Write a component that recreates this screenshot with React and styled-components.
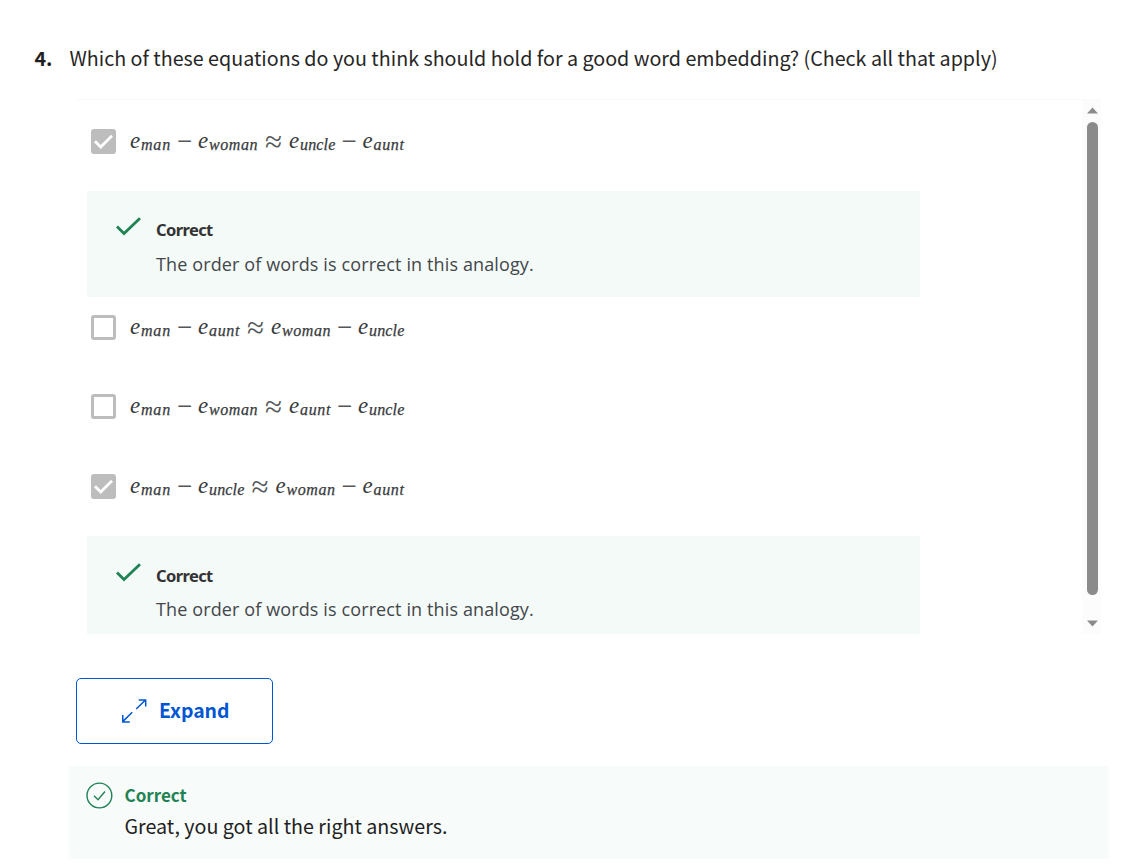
import React from "react";
import styled, { createGlobalStyle } from "styled-components";

const GlobalStyle = createGlobalStyle`
  body { margin: 0; background: #fff; }
  * { box-sizing: border-box; }
`;

const sourceFont = `"Noto Sans CJK SC", "Source Sans Pro", sans-serif`;

const Page = styled.main`
  width: 1135px;
  height: 867px;
  overflow: hidden;
  padding-top: 43px;
  background: #fff;
  color: #1f1f1f;
  font-family: ${sourceFont};
`;

const Question = styled.h1`
  display: flex;
  margin: 0 0 26px;
  padding-left: 34.5px;
  font-size: 19.7px;
  font-weight: 400;
  line-height: 30px;
  white-space: nowrap;
`;

const QuestionNumber = styled.span`
  width: 35px;
  font-weight: 700;
`;

const Prompt = styled.span`
  color: #262626;
`;

const ScrollArea = styled.section`
  display: flex;
  justify-content: space-between;
  width: 1025px;
  height: 535px;
  margin-left: 76px;
  overflow: hidden;
  border-top: 1px solid #f9f9f9;
`;

const Options = styled.div`
  width: 844px;
  padding: 29px 0 0 11px;
`;

const OptionRow = styled.div`
  display: flex;
  height: 25px;
  margin-bottom: ${(p) => p.$gap}px;
  padding-left: 4px;
`;

const Checkbox = styled.span`
  width: 25px;
  height: 25px;
  margin-right: 14px;
  border: 3px solid #bdbdbd;
  border-radius: 3px;
  background: ${(p) => (p.$checked ? "#bdbdbd" : "#fff")};
  svg { display: block; width: 19px; height: 19px; }
`;

const Equation = styled.span`
  display: flex;
  height: 25px;
  color: #373a3c;
  font-family: "Liberation Serif", serif;
  line-height: 25px;
  white-space: nowrap;
`;

const Vector = styled.i`
  width: 11px;
  font-size: 23px;
  line-height: 23px;
`;

const Subscript = styled.i`
  width: ${(p) => p.$width}px;
  padding-top: 4px;
  font-size: 16px;
  line-height: 24px;
  letter-spacing: ${(p) => p.$spacing}px;
  -webkit-text-stroke: 0.25px #373a3c;
`;

const Operator = styled.span`
  width: ${(p) => (p.$wide ? 31 : 27)}px;
  color: #55585a;
  font-size: ${(p) => (p.$wide ? 31 : 27)}px;
  line-height: ${(p) => (p.$wide ? 25 : 24)}px;
  text-align: center;
`;

const Feedback = styled.div`
  display: flex;
  width: 833px;
  height: 106px;
  margin-bottom: 18px;
  padding: 26px 0 0 29px;
  background: #f4faf8;
  font-family: "Open Sans", "Segoe UI", sans-serif;
  color: #43474a;
  svg { width: 25px; height: 19px; margin: ${(p) => p.$drop}px 15px 0 0; }
`;

const FeedbackText = styled.div`
  white-space: nowrap;
`;

const FeedbackTitle = styled.strong`
  display: block;
  height: 34px;
  color: #333;
  font-family: "Noto Sans", sans-serif;
  font-size: 16.5px;
  font-weight: 700;
  letter-spacing: -0.6px;
  line-height: ${(p) => 25 + 2 * p.$drop}px;
`;

const FeedbackBody = styled.span`
  display: block;
  font-size: 18px;
  font-weight: 400;
  letter-spacing: 0.12px;
  line-height: 26px;
`;

const ScrollTrack = styled.div`
  display: flex;
  flex-direction: column;
  align-items: center;
  width: 19px;
  height: 534px;
  padding: 7px 0 0 2px;
  background: #fcfcfc;
  svg { display: block; width: 11px; height: 7px; flex: none; }
`;

const ScrollThumb = styled.div`
  width: 11px;
  height: 473px;
  margin: 8px 0 25px;
  border-radius: 6px;
  background: #8b8b8b;
`;

const ExpandButton = styled.button`
  display: flex;
  align-items: center;
  width: 197px;
  height: 66px;
  margin: 44px 0 22px 76px;
  padding: 0 0 2px 44px;
  border: 1.4px solid #0056d2;
  border-radius: 5px;
  background: #fff;
  color: #0056d2;
  font: 700 19.4px/30px ${sourceFont};
  svg { width: 26px; height: 26px; margin: 1px 12px 0 0; }
`;

const Result = styled.section`
  display: flex;
  width: 1040px;
  height: 93px;
  margin-left: 69px;
  padding: 16px 0 0 17px;
  background: #f7fbfa;
  svg { width: 27px; height: 27px; margin-right: 11.5px; }
`;

const ResultTitle = styled.strong`
  display: block;
  height: 30px;
  color: #1f8354;
  font-size: 17px;
  line-height: 26px;
`;

const ResultBody = styled.span`
  display: block;
  font-size: 19.7px;
  line-height: 28px;
  white-space: nowrap;
`;

const SUBS = {
  man: { width: 30, spacing: 0.8 },
  woman: { width: 49, spacing: 0.55 },
  uncle: { width: 35.5, spacing: 0.15 },
  aunt: { width: 31, spacing: 0.65 },
};

function Embedding({ word }) {
  const s = SUBS[word];
  return (
    <>
      <Vector>e</Vector>
      <Subscript $width={s.width} $spacing={s.spacing}>{word}</Subscript>
    </>
  );
}

function Option({ checked, words, gap }) {
  const [a, b, c, d] = words;
  return (
    <OptionRow $gap={gap}>
      <Checkbox $checked={checked}>
        {checked && (
          <svg viewBox="0 0 19 19" fill="none" stroke="#fff" strokeWidth="2.8">
            <path d="M1 9.3L6.7 15L18 3.7" />
          </svg>
        )}
      </Checkbox>
      <Equation>
        <Embedding word={a} />
        <Operator>−</Operator>
        <Embedding word={b} />
        <Operator $wide>≈</Operator>
        <Embedding word={c} />
        <Operator>−</Operator>
        <Embedding word={d} />
      </Equation>
    </OptionRow>
  );
}

function CorrectFeedback({ drop = 0 }) {
  return (
    <Feedback $drop={drop}>
      <svg viewBox="0 0 25 19" fill="none" stroke="#1f8354" strokeWidth="2.8">
        <path d="M1 9.5L8 16.5L24 1.2" />
      </svg>
      <FeedbackText>
        <FeedbackTitle $drop={drop}>Correct</FeedbackTitle>
        <FeedbackBody>The order of words is correct in this analogy.</FeedbackBody>
      </FeedbackText>
    </Feedback>
  );
}

export default function App() {
  return (
    <Page>
      <GlobalStyle />
      <Question>
        <QuestionNumber>4.</QuestionNumber>
        <Prompt>Which of these equations do you think should hold for a good word embedding? (Check all that apply)</Prompt>
      </Question>
      <ScrollArea>
        <Options>
          <Option checked words={["man", "woman", "uncle", "aunt"]} gap={37} />
          <CorrectFeedback />
          <Option words={["man", "aunt", "woman", "uncle"]} gap={54} />
          <Option words={["man", "woman", "aunt", "uncle"]} gap={55} />
          <Option checked words={["man", "uncle", "woman", "aunt"]} gap={37} />
          <CorrectFeedback drop={1} />
        </Options>
        <ScrollTrack>
          <svg viewBox="0 0 11 7"><path d="M0 6.5L5.5 0.5L11 6.5Z" fill="#8b8b8b" /></svg>
          <ScrollThumb />
          <svg viewBox="0 0 11 7"><path d="M0 0.5L5.5 6.5L11 0.5Z" fill="#8b8b8b" /></svg>
        </ScrollTrack>
      </ScrollArea>
      <ExpandButton>
        <svg viewBox="0 0 26 26" fill="none" stroke="#0056d2" strokeWidth="1.5">
          <path d="M15.2 11L24.5 2M17.7 1.9H24.7V8.5M11.2 14.3L2 23.4M1.8 17V24H8.8" />
        </svg>
        Expand
      </ExpandButton>
      <Result>
        <svg viewBox="0 0 27 27" fill="none" stroke="#1f8354" strokeWidth="1.4">
          <circle cx="13.4" cy="13.5" r="12.4" />
          <path d="M8 13.8L12 17.8L19 9.5" />
        </svg>
        <div>
          <ResultTitle>Correct</ResultTitle>
          <ResultBody>Great, you got all the right answers.</ResultBody>
        </div>
      </Result>
    </Page>
  );
}
